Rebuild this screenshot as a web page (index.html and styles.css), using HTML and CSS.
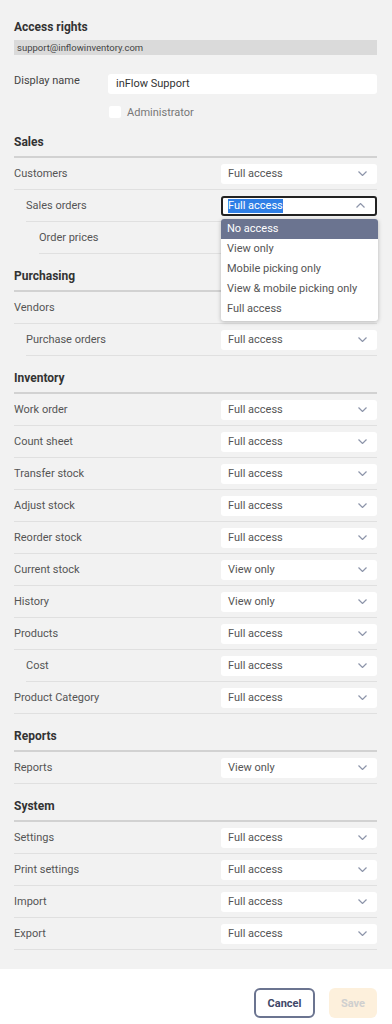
FILE: index.html
```html
<!DOCTYPE html>
<html lang="en">
<head>
    <meta charset="UTF-8">
    <meta name="viewport" content="width=device-width, initial-scale=1.0">
    <title>Access rights - inFlow</title>
    <link rel="stylesheet" href="styles.css">
</head>
<body>
    <main class="page">
        <h1 class="page-title">Access rights</h1>
        <div class="email">support@inflowinventory.com</div>

        <div class="field-row">
            <label class="field-label">Display name</label>
            <div class="text-input">inFlow Support</div>
        </div>
        <div class="check-row">
            <span class="checkbox"></span>
            <span>Administrator</span>
        </div>

        <!-- Sales -->
        <h2 class="section-title">Sales</h2>
        <div class="perm-row">
            <span>Customers</span>
            <div class="select">Full access<svg class="chev" viewBox="0 0 9 5"><polyline points="0.5,0.5 4.5,4.5 8.5,0.5"/></svg></div>
        </div>
        <div class="perm-row indent-1">
            <span>Sales orders</span>
            <div class="select-wrap">
                <div class="select open"><span class="selected-text">Full access</span><svg class="chev" viewBox="0 0 9 5"><polyline points="0.5,4.5 4.5,0.5 8.5,4.5"/></svg></div>
                <ul class="dropdown">
                    <li class="active">No access</li>
                    <li>View only</li>
                    <li>Mobile picking only</li>
                    <li>View &amp; mobile picking only</li>
                    <li>Full access</li>
                </ul>
            </div>
        </div>
        <div class="perm-row indent-2">
            <span>Order prices</span>
            <!-- covered by the open list above -->
            <div class="select covered">Full access<svg class="chev" viewBox="0 0 9 5"><polyline points="0.5,0.5 4.5,4.5 8.5,0.5"/></svg></div>
        </div>

        <!-- Purchasing -->
        <h2 class="section-title">Purchasing</h2>
        <div class="perm-row">
            <span>Vendors</span>
            <div class="select covered">Full access<svg class="chev" viewBox="0 0 9 5"><polyline points="0.5,0.5 4.5,4.5 8.5,0.5"/></svg></div>
        </div>
        <div class="perm-row indent-1">
            <span>Purchase orders</span>
            <div class="select">Full access<svg class="chev" viewBox="0 0 9 5"><polyline points="0.5,0.5 4.5,4.5 8.5,0.5"/></svg></div>
        </div>

        <!-- Inventory -->
        <h2 class="section-title">Inventory</h2>
        <div class="perm-row">
            <span>Work order</span>
            <div class="select">Full access<svg class="chev" viewBox="0 0 9 5"><polyline points="0.5,0.5 4.5,4.5 8.5,0.5"/></svg></div>
        </div>
        <div class="perm-row">
            <span>Count sheet</span>
            <div class="select">Full access<svg class="chev" viewBox="0 0 9 5"><polyline points="0.5,0.5 4.5,4.5 8.5,0.5"/></svg></div>
        </div>
        <div class="perm-row">
            <span>Transfer stock</span>
            <div class="select">Full access<svg class="chev" viewBox="0 0 9 5"><polyline points="0.5,0.5 4.5,4.5 8.5,0.5"/></svg></div>
        </div>
        <div class="perm-row">
            <span>Adjust stock</span>
            <div class="select">Full access<svg class="chev" viewBox="0 0 9 5"><polyline points="0.5,0.5 4.5,4.5 8.5,0.5"/></svg></div>
        </div>
        <div class="perm-row">
            <span>Reorder stock</span>
            <div class="select">Full access<svg class="chev" viewBox="0 0 9 5"><polyline points="0.5,0.5 4.5,4.5 8.5,0.5"/></svg></div>
        </div>
        <div class="perm-row">
            <span>Current stock</span>
            <div class="select">View only<svg class="chev" viewBox="0 0 9 5"><polyline points="0.5,0.5 4.5,4.5 8.5,0.5"/></svg></div>
        </div>
        <div class="perm-row">
            <span>History</span>
            <div class="select">View only<svg class="chev" viewBox="0 0 9 5"><polyline points="0.5,0.5 4.5,4.5 8.5,0.5"/></svg></div>
        </div>
        <div class="perm-row">
            <span>Products</span>
            <div class="select">Full access<svg class="chev" viewBox="0 0 9 5"><polyline points="0.5,0.5 4.5,4.5 8.5,0.5"/></svg></div>
        </div>
        <div class="perm-row indent-1">
            <span>Cost</span>
            <div class="select">Full access<svg class="chev" viewBox="0 0 9 5"><polyline points="0.5,0.5 4.5,4.5 8.5,0.5"/></svg></div>
        </div>
        <div class="perm-row">
            <span>Product Category</span>
            <div class="select">Full access<svg class="chev" viewBox="0 0 9 5"><polyline points="0.5,0.5 4.5,4.5 8.5,0.5"/></svg></div>
        </div>

        <!-- Reports -->
        <h2 class="section-title">Reports</h2>
        <div class="perm-row">
            <span>Reports</span>
            <div class="select">View only<svg class="chev" viewBox="0 0 9 5"><polyline points="0.5,0.5 4.5,4.5 8.5,0.5"/></svg></div>
        </div>

        <!-- System -->
        <h2 class="section-title">System</h2>
        <div class="perm-row">
            <span>Settings</span>
            <div class="select">Full access<svg class="chev" viewBox="0 0 9 5"><polyline points="0.5,0.5 4.5,4.5 8.5,0.5"/></svg></div>
        </div>
        <div class="perm-row">
            <span>Print settings</span>
            <div class="select">Full access<svg class="chev" viewBox="0 0 9 5"><polyline points="0.5,0.5 4.5,4.5 8.5,0.5"/></svg></div>
        </div>
        <div class="perm-row">
            <span>Import</span>
            <div class="select">Full access<svg class="chev" viewBox="0 0 9 5"><polyline points="0.5,0.5 4.5,4.5 8.5,0.5"/></svg></div>
        </div>
        <div class="perm-row">
            <span>Export</span>
            <div class="select">Full access<svg class="chev" viewBox="0 0 9 5"><polyline points="0.5,0.5 4.5,4.5 8.5,0.5"/></svg></div>
        </div>
    </main>

    <footer class="footer">
        <button class="btn btn-cancel">Cancel</button>
        <button class="btn btn-save">Save</button>
    </footer>
</body>
</html>
```

FILE: styles.css
```css
:root {
    --page-bg: #f2f2f2;
    --heading-color: #333;
    --label-color: #555;
    --line-color: #d2d2d2;
    --row-line: #e0e0e0;
    --slate: #6b7490;
}

* {
    margin: 0;
    padding: 0;
    box-sizing: border-box;
}

body {
    font-family: Roboto, 'Liberation Sans', sans-serif;
    background-color: #fff;
    color: var(--label-color);
    font-size: 11px;
}

.page {
    background-color: var(--page-bg);
    padding: 19px 15px 19px 14px;
}

.page-title {
    font-size: 12px;
    line-height: 16px;
    font-weight: 700;
    color: var(--heading-color);
}

.email {
    margin-top: 5px;
    height: 15px;
    line-height: 15px;
    background-color: #dadada;
    padding-left: 3px;
    font-size: 9.5px;
    color: #444;
}

.field-row {
    display: flex;
    margin-top: 19px;
}

.field-label {
    width: 94px;
    line-height: 14px;
    color: #444;
}

.text-input {
    flex: 1;
    height: 20px;
    line-height: 20px;
    background-color: #fff;
    border-radius: 3px;
    padding-left: 8px;
    color: #333;
}

.check-row {
    display: flex;
    align-items: center;
    margin: 12px 0 0 95px;
    height: 12px;
    color: #777;
}

.checkbox {
    width: 12px;
    height: 12px;
    background-color: #fff;
    border-radius: 2px;
    margin-right: 6px;
}

.section-title {
    font-size: 12px;
    line-height: 16px;
    font-weight: 700;
    color: var(--heading-color);
    padding: 14px 0 6px;
    border-bottom: 2px solid var(--line-color);
}

.check-row + .section-title {
    margin-top: 2px;
}

.perm-row {
    display: flex;
    justify-content: space-between;
    align-items: center;
    height: 32px;
    border-bottom: 1px solid var(--row-line);
}

.indent-1 {
    margin-left: 12px;
}

.indent-2 {
    margin-left: 25px;
}

.select-wrap {
    position: relative;
}

.select {
    width: 156px;
    height: 20px;
    display: flex;
    align-items: center;
    justify-content: space-between;
    background-color: #fff;
    border-radius: 3px;
    padding: 0 10px 0 7px;
    color: var(--label-color);
}

.select.covered {
    visibility: hidden;
}

.select.open {
    border: 2px solid #222;
    padding-left: 5px;
}

.selected-text {
    background-color: #2f7fe6;
    color: #fff;
    line-height: 14px;
}

.chev {
    width: 9px;
    height: 5px;
    fill: none;
    stroke: #8d95aa;
    stroke-width: 1.2;
}

.dropdown {
    position: absolute;
    top: 23px;
    left: 0;
    width: 157px;
    list-style: none;
    background-color: #fff;
    border-radius: 3px;
    box-shadow: 0 1px 4px rgba(0, 0, 0, 0.25);
    padding-bottom: 2px;
    z-index: 2;
}

.dropdown li {
    height: 20px;
    line-height: 20px;
    padding-left: 6px;
    color: var(--label-color);
}

.dropdown li.active {
    background-color: var(--slate);
    color: #fff;
    border-radius: 3px 3px 0 0;
}

.footer {
    display: flex;
    justify-content: flex-end;
    gap: 14px;
    padding: 19px 15px 0 0;
    height: 55px;
}

.btn {
    font-family: Roboto, 'Liberation Sans', sans-serif;
    font-size: 11px;
    font-weight: 700;
    height: 30px;
    border-radius: 6px;
}

.btn-cancel {
    width: 61px;
    background-color: #fff;
    border: 2px solid var(--slate);
    color: #3e4767;
}

.btn-save {
    width: 48px;
    background-color: #fdf0dc;
    border: none;
    color: #cfcfcf;
}
```
